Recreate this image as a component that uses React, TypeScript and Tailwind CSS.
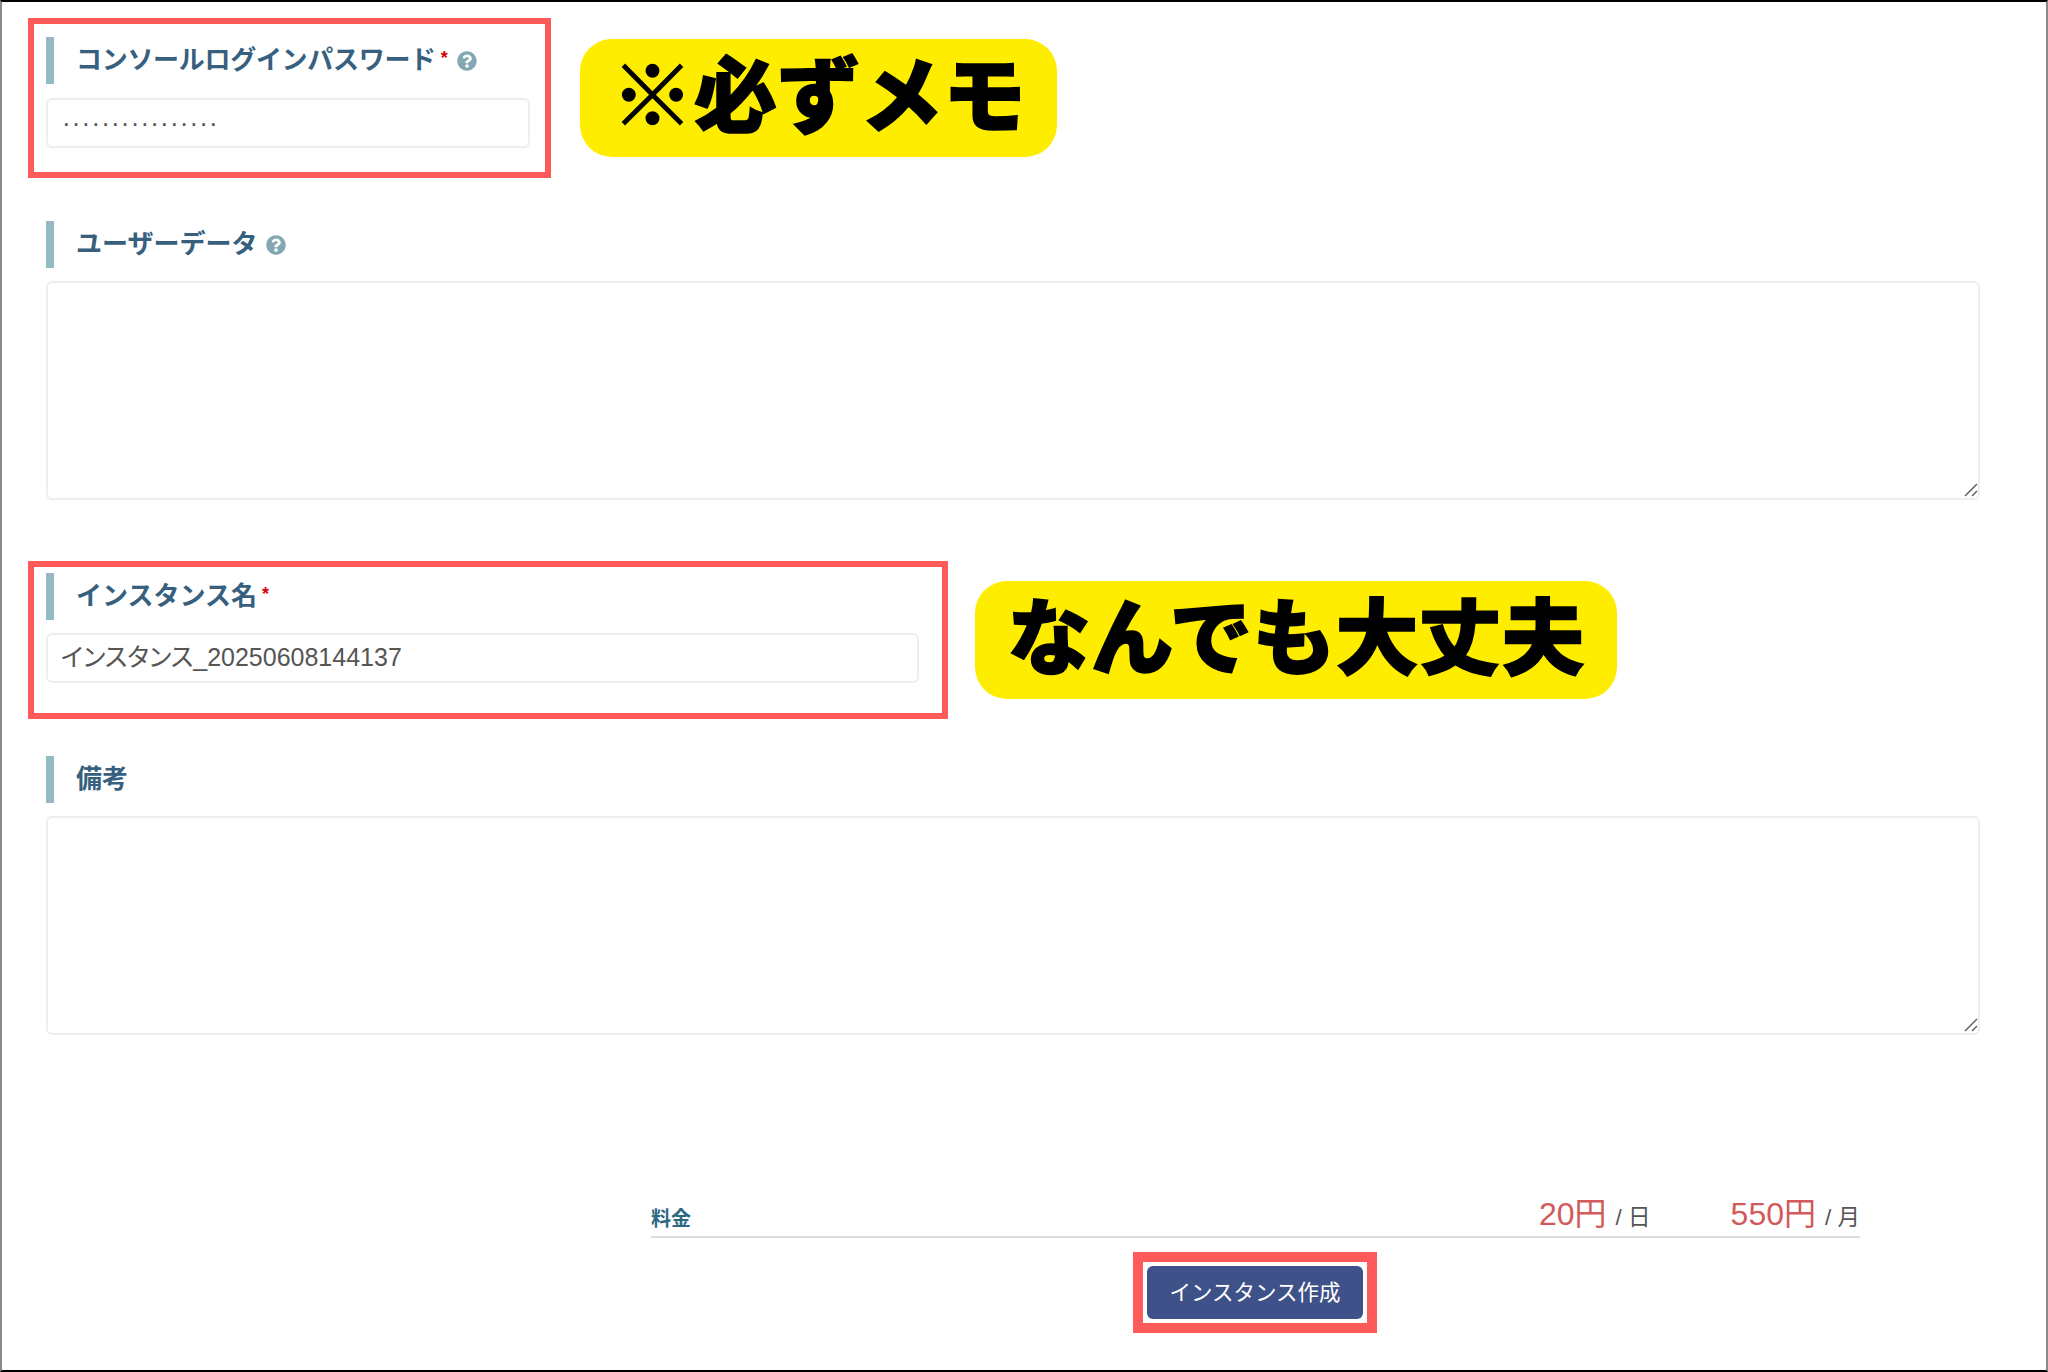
import React from "react";
import { FaQuestionCircle } from "react-icons/fa";

const font = "font-['Liberation_Sans','Noto_Sans_CJK_JP',sans-serif]";

function Label({ text, required, help, tight }: { text: string; required?: boolean; help?: boolean; tight?: boolean }) {
  return (
    <div className="flex h-[47px] items-center border-l-8 border-[#94bac4] pb-[2px] pl-[22px]">
      <span className={`text-[26px] font-bold leading-none text-[#36607e] ${tight ? "tracking-[-0.3px]" : ""}`}>{text}</span>
      {required && <span className="ml-[5px] -mt-[4px] text-[18px] font-bold leading-none text-[#d8000c]">*</span>}
      {help && <FaQuestionCircle className="ml-[9px] mt-[3px] text-[20px] text-[#83a7b3]" />}
    </div>
  );
}

function Field({ value, className }: { value: string; className: string }) {
  return (
    <input
      readOnly
      value={value}
      className={`h-[50px] rounded-md border-2 border-[#eeeeee] bg-white text-[#555] outline-none ${className}`}
    />
  );
}

function Area() {
  return (
    <div className="relative mt-[13px] h-[219px] w-[1934px]">
      <textarea readOnly className="block h-full w-full resize-none rounded-md border-2 border-[#eeeeee] bg-white outline-none" />
      <svg className="absolute bottom-[3px] right-[2px] h-[14px] w-[14px]" viewBox="0 0 14 14" fill="none" stroke="#666" strokeWidth="1.6">
        <path d="M1 13 13 1" />
        <path d="M8 13 13 8" />
      </svg>
    </div>
  );
}

function Callout({ text, className }: { text: string; className: string }) {
  return (
    <div className={`flex h-[118px] items-center justify-center rounded-[32px] bg-[#ffed00] font-black text-black [-webkit-text-stroke:1.5px_black] ${className}`}>
      {text}
    </div>
  );
}

export default function App() {
  return (
    <div className={`${font} flex h-[1372px] w-[2048px] flex-col overflow-hidden border-x-2 border-b-2 border-t-2 border-x-[#8a8a8a] border-b-black border-t-black bg-white`}>
      <div className="ml-[26px] mt-[16px] flex items-start">
        <div className="h-[160px] w-[523px] border-[6px] border-[#ff5a5a] pl-[12px] pt-[13px]">
          <Label text="コンソールログインパスワード" required help tight />
          <Field value={"·".repeat(16)} className="mt-[14px] w-[484px] pl-[14px] pt-[1px] text-[26px] tracking-[1.15px]" />
        </div>
        <Callout text="※必ずメモ" className="ml-[29px] mt-[21px] w-[477px] text-[83px]" />
      </div>

      <div className="ml-[44px] mt-[43px]">
        <Label text="ユーザーデータ" help />
        <Area />
      </div>

      <div className="ml-[26px] mt-[61px] flex items-start">
        <div className="h-[158px] w-[920px] border-[6px] border-[#ff5a5a] pl-[12px] pt-[6px]">
          <Label text="インスタンス名" required />
          <Field value="インスタンス_20250608144137" className="mt-[13px] w-[873px] px-[13px] pb-[7px] text-[25px] [font-feature-settings:'palt']" />
        </div>
        <Callout text="なんでも大丈夫" className="ml-[27px] mt-[20px] w-[642px] text-[83px]" />
      </div>

      <div className="ml-[44px] mt-[37px]">
        <Label text="備考" />
        <Area />
      </div>

      <div className="ml-[649px] mt-[165px] flex h-[38px] w-[1209px] items-end border-b-2 border-[#dcdcdc] pb-[6px]">
        <span className="mb-[1px] text-[20px] font-bold leading-none text-[#2d6a82]">料金</span>
        <span className="ml-auto text-[32px] leading-none text-[#d25a5a]">20円</span>
        <span className="ml-[9px] mb-[1px] text-[22.5px] leading-none text-[#555]">/ 日</span>
        <span className="ml-[80px] text-[32px] leading-none text-[#d25a5a]">550円</span>
        <span className="ml-[9px] mb-[1px] text-[22.5px] leading-none text-[#555]">/ 月</span>
      </div>

      <div className="ml-[1131px] mt-[14px] flex h-[81px] w-[244px] items-center justify-center border-[10px] border-[#ff5a5a]">
        <button className="h-[53px] w-[216px] rounded-md bg-[#3f5189] pt-[2px] text-[21.5px] text-white">インスタンス作成</button>
      </div>
    </div>
  );
}
